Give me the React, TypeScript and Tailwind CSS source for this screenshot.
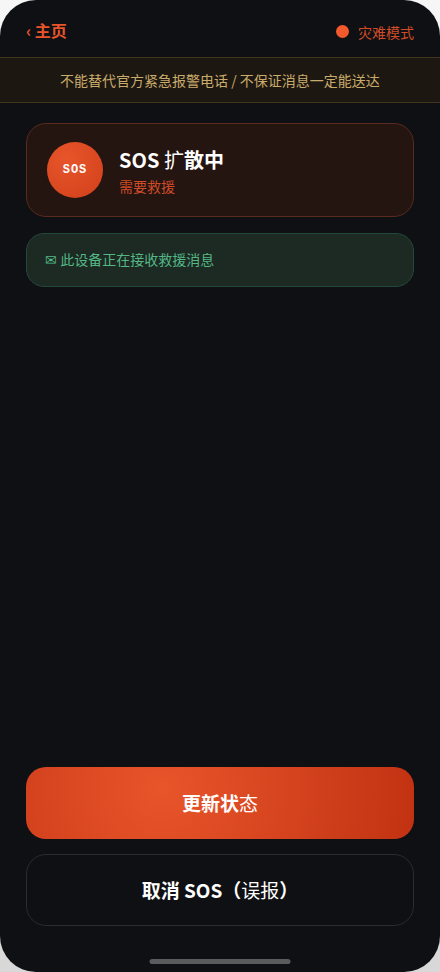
import clsx from "clsx";
import type { ReactNode } from "react";

type ActionButtonProps = {
  primary?: boolean;
  children: ReactNode;
};

function ActionButton({ primary, children }: ActionButtonProps) {
  return (
    <button
      type="button"
      className={clsx(
        "h-[72px] w-full rounded-[20px] text-[19px] font-bold text-white",
        primary
          ? "bg-[radial-gradient(circle_at_35%_30%,#e8552b,#c23212)]"
          : "border border-[#2b2c30]"
      )}
    >
      {children}
    </button>
  );
}

function Header() {
  return (
    <header className="flex h-[57px] items-center justify-between px-[26px] pt-1 text-[#e8552b]">
      <a href="#home" className="pb-0.5 text-base font-bold">
        ‹ 主页
      </a>
      <div className="flex items-center gap-[9px] pt-0.5 text-sm">
        <span className="h-[13px] w-[13px] rounded-full bg-[#f05a2d]" />
        <span className="leading-4 text-[#d04c28]">灾难模式</span>
      </div>
    </header>
  );
}

export default function App() {
  return (
    <div className="min-h-screen bg-[linear-gradient(#f6f6f6,#d8d8d8)] font-['Noto_Sans_CJK_SC',sans-serif]">
      <div className="relative flex min-h-screen flex-col overflow-hidden rounded-[36px] bg-[#0f1013]">
        <Header />
        <p className="border-y border-[#42351b] bg-[#1d1711] py-3 text-center text-sm leading-5 text-[#c9ab6b]">
          不能替代官方紧急报警电话 / 不保证消息一定能送达
        </p>

        <main className="flex flex-1 flex-col px-[26px] pt-5 pb-[46px]">
          <section className="flex items-center gap-4 rounded-[20px] border border-[#5a2a1f] bg-[#241511] px-5 py-[18px]">
            <div className="flex h-14 w-14 items-center justify-center rounded-full bg-[radial-gradient(circle_at_35%_30%,#e8552b,#d0401a)] font-['Liberation_Mono',monospace] text-xs font-bold tracking-[1px] text-white">
              SOS
            </div>
            <div className="pt-1">
              <h1 className="text-xl leading-7 font-bold text-white">
                SOS <span className="font-normal">扩</span>散中
              </h1>
              <p className="text-sm leading-6 text-[#d04c28]">需要救援</p>
            </div>
          </section>

          <p className="mt-4 rounded-[18px] border border-[#24493a] bg-[#1c2a23] px-[18px] pt-[15px] pb-[17px] text-sm leading-5 text-[#54b785]">
            ✉ 此设备正在接收救援消息
          </p>

          <div className="mt-auto flex flex-col gap-[15px]">
            <ActionButton primary>
              更新状<span className="font-normal">态</span>
            </ActionButton>
            <ActionButton>
              取消 SOS（<span className="font-normal">误报</span>）
            </ActionButton>
          </div>
        </main>

        <div className="absolute bottom-2 left-1/2 h-[5px] w-[141px] -translate-x-1/2 rounded-full bg-[#5a5b5d]" />
      </div>
    </div>
  );
}
